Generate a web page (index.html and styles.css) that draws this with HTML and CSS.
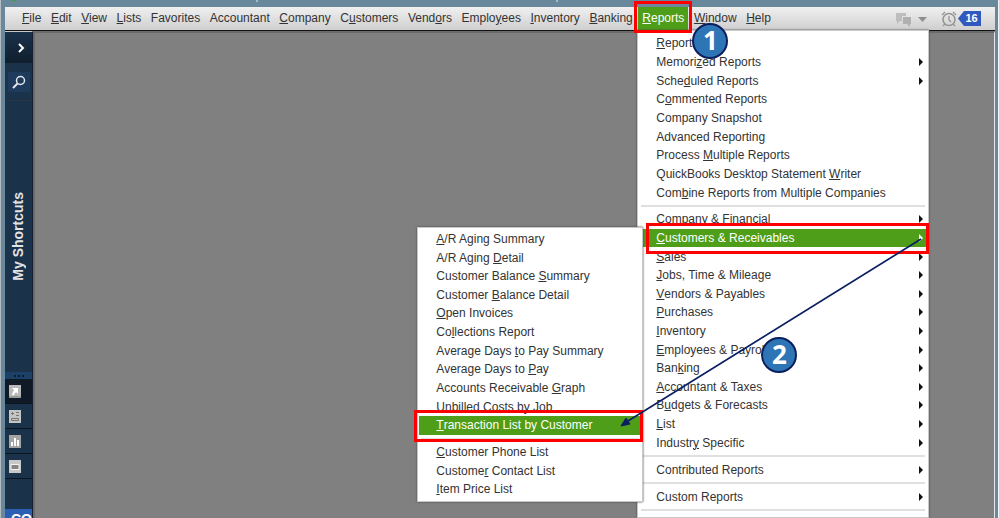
FILE: index.html
```html
<!DOCTYPE html>
<html lang="en">
<head>
    <meta charset="UTF-8">
    <meta name="viewport" content="width=device-width, initial-scale=1.0">
    <title>Reports menu</title>
    <link rel="stylesheet" href="styles.css">
</head>
<body>
    <div class="frame">
        <div class="title-bar">
            <svg class="app-icon" width="12" height="7" viewBox="0 0 12 7"><circle cx="6" cy="-5" r="6" fill="#3f9c35"/></svg>
            <svg class="title-mark" width="4" height="7" viewBox="0 0 4 7"><path d="M1 0v2" stroke="#e8eef2"/></svg>
            <svg class="title-mark" width="4" height="7" viewBox="0 0 4 7"><path d="M1 0v2" stroke="#e8eef2"/></svg>
        </div>
        <nav class="menu-bar">
            <div class="menus">
                <button class="menu-btn"><u>F</u>ile</button>
                <button class="menu-btn"><u>E</u>dit</button>
                <button class="menu-btn"><u>V</u>iew</button>
                <button class="menu-btn"><u>L</u>ists</button>
                <button class="menu-btn">Favorites</button>
                <button class="menu-btn">Accountant</button>
                <button class="menu-btn"><u>C</u>ompany</button>
                <button class="menu-btn">C<u>u</u>stomers</button>
                <button class="menu-btn">Vend<u>o</u>rs</button>
                <button class="menu-btn">Emplo<u>y</u>ees</button>
                <button class="menu-btn"><u>I</u>nventory</button>
                <button class="menu-btn"><u>B</u>anking</button>
                <div class="menu-open">
                    <button class="menu-btn active"><u>R</u>eports</button>
                    <div class="dropdown reports">
                        <ul class="group top">
                            <li><button class="item"><u>R</u>eport</button></li>
                            <li><button class="item more">Memori<u>z</u>ed Reports</button></li>
                            <li><button class="item more">Sche<u>d</u>uled Reports</button></li>
                            <li><button class="item">C<u>o</u>mmented Reports</button></li>
                            <li><button class="item">Company Snapshot</button></li>
                            <li><button class="item">Advanced Reporting</button></li>
                            <li><button class="item">Process <u>M</u>ultiple Reports</button></li>
                            <li><button class="item">QuickBooks Desktop Statement <u>W</u>riter</button></li>
                            <li><button class="item">Com<u>b</u>ine Reports from Multiple Companies</button></li>
                        </ul>
                        <hr>
                        <ul class="group areas">
                            <li><button class="item more">Company &amp; Financi<u>a</u>l</button></li>
                            <li class="opened">
                                <button class="item more active"><u>C</u>ustomers &amp; Receivables</button>
                                <div class="dropdown customers">
                                    <ul class="group lists">
                                        <li><button class="item"><u>A</u>/R Aging Summary</button></li>
                                        <li><button class="item">A/R Aging <u>D</u>etail</button></li>
                                        <li><button class="item">Customer Balance <u>S</u>ummary</button></li>
                                        <li><button class="item">Customer <u>B</u>alance Detail</button></li>
                                        <li><button class="item"><u>O</u>pen Invoices</button></li>
                                        <li><button class="item">Co<u>l</u>lections Report</button></li>
                                        <li><button class="item">Average Days <u>t</u>o Pay Summary</button></li>
                                        <li><button class="item">Average Days to <u>P</u>ay</button></li>
                                        <li><button class="item">Accounts Receivable <u>G</u>raph</button></li>
                                        <li><button class="item">Unbilled Costs by <u>J</u>ob</button></li>
                                        <li class="opened">
                                            <button class="item active"><u>T</u>ransaction List by Customer</button>
                                            <span class="mark-box mark-transaction"></span>
                                        </li>
                                    </ul>
                                    <hr>
                                    <ul class="group contacts">
                                        <li><button class="item"><u>C</u>ustomer Phone List</button></li>
                                        <li><button class="item">Custome<u>r</u> Contact List</button></li>
                                        <li><button class="item"><u>I</u>tem Price List</button></li>
                                    </ul>
                                </div>
                                <span class="mark-box mark-customers"></span>
                                <svg class="arrow" width="304" height="192" viewBox="0 0 304 192">
                                    <path d="M302 2L9 184" fill="none" stroke="#0b1f63" stroke-width="1.7"/>
                                    <path d="M2 189l5-8 4 6z" fill="#0b1f63" stroke="#0b1f63"/>
                                </svg>
                                <span class="step step-two">2</span>
                            </li>
                            <li><button class="item more"><u>S</u>ales</button></li>
                            <li><button class="item more"><u>J</u>obs, Time &amp; Mileage</button></li>
                            <li><button class="item more"><u>V</u>endors &amp; Payables</button></li>
                            <li><button class="item more"><u>P</u>urchases</button></li>
                            <li><button class="item more"><u>I</u>nventory</button></li>
                            <li><button class="item more"><u>E</u>mployees &amp; Payroll</button></li>
                            <li><button class="item more">Ban<u>k</u>ing</button></li>
                            <li><button class="item more"><u>A</u>ccountant &amp; Taxes</button></li>
                            <li><button class="item more">B<u>u</u>dgets &amp; Forecasts</button></li>
                            <li><button class="item more"><u>L</u>ist</button></li>
                            <li><button class="item more">Industr<u>y</u> Specific</button></li>
                        </ul>
                        <hr>
                        <ul class="group single">
                            <li><button class="item more">Contributed Reports</button></li>
                        </ul>
                        <hr>
                        <ul class="group single">
                            <li><button class="item more">Custom Reports</button></li>
                        </ul>
                        <hr>
                    </div>
                    <span class="mark-box mark-reports"></span>
                    <span class="step step-one">1</span>
                </div>
                <button class="menu-btn"><u>W</u>indow</button>
                <button class="menu-btn"><u>H</u>elp</button>
            </div>
            <div class="status">
                <button class="icon-btn" aria-label="Messages">
                    <svg width="34" height="16" viewBox="0 0 34 16">
                        <path d="M1 2h10v3H7v5H5l-3 3v-3H1z" fill="#bdbdbd"/>
                        <path d="M8 6h8v7h-1v3l-3-3H8z" fill="#b0b0b0"/>
                        <path d="M23 6h9l-4.500 5z" fill="#8e8e8e"/>
                    </svg>
                </button>
                <button class="icon-btn reminder" aria-label="Reminders">
                    <svg width="16" height="16" viewBox="0 0 16 16" fill="none" stroke="#959595">
                        <circle cx="8" cy="8.500" r="6" stroke-width="1.600"/>
                        <path d="M8 5v4l2 2M1 4l3-3M15 4l-3-3M4 13l-2 2M12 13l2 2" stroke-width="1.300"/>
                    </svg>
                    <span class="count">16</span>
                </button>
            </div>
        </nav>
        <div class="workspace">
            <aside class="shortcuts">
                <button class="side-btn expand" aria-label="Expand">
                    <svg width="14" height="14" viewBox="0 0 14 14"><path d="M5 3l4 4-4 4" fill="none" stroke="#fff" stroke-width="2"/></svg>
                </button>
                <button class="side-btn search" aria-label="Search">
                    <span class="search-box">
                        <svg width="14" height="14" viewBox="0 0 14 14" fill="none" stroke="#e4e8ec">
                            <circle cx="8.500" cy="5.500" r="4" stroke-width="1.500"/>
                            <path d="M5.500 8.500L1 13" stroke-width="2"/>
                        </svg>
                    </span>
                </button>
                <div class="side-title"><span>My Shortcuts</span></div>
                <div class="grip"><i></i><i></i><i></i></div>
                <button class="side-btn tool current" aria-label="My Shortcuts">
                    <svg width="12" height="13" viewBox="0 0 12 13"><path d="M0 0h12v13H0z" fill="#b9b9b9"/><path d="M3 3h6v6L7 7l-3 4-1-2 2-4z" fill="#fff"/><path d="M0 12h12" stroke="#7d7d7d"/></svg>
                </button>
                <button class="side-btn tool" aria-label="View Balances">
                    <svg width="12" height="13" viewBox="0 0 12 13"><path d="M0 0h12v13H0z" fill="#c4c4c4"/><path d="M2 3.500h3M3.500 2v3M7 2.500h3M7 5.500h3M2.500 8.500h7v2h-7z" fill="none" stroke="#777"/></svg>
                </button>
                <button class="side-btn tool" aria-label="Run Favorite Reports">
                    <svg width="12" height="13" viewBox="0 0 12 13"><path d="M0 0h12v13H0z" fill="#a4a4a4"/><path d="M3 11V7M6 11V3M9 11V5" stroke="#fff" stroke-width="2"/></svg>
                </button>
                <button class="side-btn tool" aria-label="Open Windows">
                    <svg width="12" height="13" viewBox="0 0 12 13"><path d="M0 0h12v13H0z" fill="#c8c8c8"/><path d="M2 4.500h8v5H2z" fill="#858585" stroke="#f4f4f4"/></svg>
                </button>
                <div class="spacer"></div>
                <div class="promo">CO</div>
            </aside>
            <main class="desktop"></main>
        </div>
    </div>
</body>
</html>
```

FILE: styles.css
```css
*{
    margin: 0;
    padding: 0;
    box-sizing: border-box;
}
body{
    height: 100vh;
    overflow: hidden;
    background: #f2f4f6;
    color: #333;
    font: 12px/18px "Liberation Sans", Arial, sans-serif;
}
ul{
    list-style: none;
}
svg{
    display: block;
}
button{
    border: none;
    background: none;
    color: inherit;
    font: inherit;
}
.frame{
    display: flex;
    flex-direction: column;
    height: 100%;
    margin-right: 1px;
    padding: 0 3px 0 4px;
    border-left: 1px solid #b5bcc1;
    background: #6a889c;
}
.title-bar{
    display: flex;
    flex: none;
    gap: 236px;
    height: 7px;
    padding-left: 3px;
}
.title-mark + .title-mark{
    margin-left: 60px;
}

/* menu bar */
.menu-bar{
    display: flex;
    flex: none;
    position: relative;
    z-index: 1;
    height: 24px;
    padding-left: 13px;
    border-bottom: 1px solid #111;
    background: linear-gradient(#f0f0f0, #cfcfcf);
}
.menus{
    display: flex;
    justify-content: space-between;
    width: 757px;
}
.menu-btn{
    padding: 0 4px 1px;
    white-space: nowrap;
}
.menu-open,
.opened{
    position: relative;
}
.menu-open{
    display: flex;
}
.active{
    background: #4e9e19;
    color: #fff;
}
.status{
    display: flex;
    align-items: center;
    gap: 12px;
    margin-left: auto;
    padding-right: 14px;
}
.icon-btn{
    display: flex;
    align-items: center;
}
.reminder{
    gap: 1px;
}
.count{
    width: 23px;
    padding-left: 4px;
    background: #3059c0;
    color: #fff;
    font-size: 11px;
    font-weight: bold;
    line-height: 15px;
    clip-path: polygon(0 50%, 6px 0, 100% 0, 100% 100%, 6px 100%);
}

/* drop-down menus */
.dropdown{
    position: absolute;
    padding: 3px 1px;
    border: 1px solid #c8c8c8;
    background: #fff;
    box-shadow: 0 0 2px #444;
}
.reports{
    top: 23px;
    left: -1px;
    width: 292px;
}
.customers{
    top: -2px;
    right: 284px;
    width: 226px;
    padding: 2px 1px;
}
.group{
    display: grid;
    grid-auto-rows: 1fr;
}
.top{
    height: 168px;
}
.areas{
    height: 242px;
}
.lists{
    height: 205px;
}
.contacts{
    height: 56px;
}
.single{
    height: 19px;
}
.item{
    display: flex;
    align-items: center;
    width: 100%;
    height: 100%;
    padding: 0 16px;
    white-space: pre;
    text-align: left;
}
.reports .item{
    padding: 0 4px 0 17px;
}
.more::after{
    content: "";
    margin-left: auto;
    border: 4px solid transparent;
    border-left-color: #111;
    border-right: none;
}
.more.active::after{
    border-left-color: #fff;
}
hr{
    height: 2px;
    margin: 3px 2px;
    border: none;
    background: #e0e0e0;
}

/* numbered steps */
.mark-box{
    position: absolute;
    border: 3px solid #f00;
    pointer-events: none;
}
.mark-reports{
    inset: -6px -4px -3px -4px;
}
.mark-customers{
    inset: -6px -2px -7px 7px;
}
.mark-transaction{
    inset: -6px -2px -7px -5px;
}
.arrow{
    position: absolute;
    top: 8px;
    right: 4px;
}
.step{
    position: absolute;
    width: 36px;
    height: 36px;
    border: 2px solid #0b1f5e;
    border-radius: 50%;
    background: #2e75b6;
    color: #fff;
    font: bold 26px/31px "Open Sans", sans-serif;
    text-align: center;
}
.step-one{
    top: 16px;
    left: 54px;
}
.step-two{
    top: 108px;
    left: 122px;
}

/* shortcuts bar */
.workspace{
    display: flex;
    flex: 1;
    min-height: 0;
}
.shortcuts{
    display: flex;
    flex-direction: column;
    width: 28px;
    border-top: 1px solid #c4c8cc;
    border-right: 1px solid #12202e;
    background: #1b324b;
}
.side-btn{
    display: flex;
    flex: none;
    align-items: center;
    justify-content: center;
}
.expand{
    height: 31px;
    padding-left: 4px;
    background: linear-gradient(#1b324b, #0f1e2d);
}
.search{
    height: 38px;
    border-bottom: 1px solid #2b3440;
}
.search-box{
    padding: 3px 4px;
    background: #1e3a5c;
}
.side-title{
    flex: 1;
    padding: 91px 0 0 4px;
    color: #e3e3e3;
    font-size: 14px;
    font-weight: bold;
}
.side-title span{
    writing-mode: vertical-rl;
    transform: rotate(180deg);
}
.grip{
    display: flex;
    flex: none;
    align-items: center;
    justify-content: center;
    gap: 2px;
    height: 7px;
    background: #1d4068;
}
.grip i{
    width: 2px;
    height: 2px;
    background: #0e1c2a;
}
.tool{
    justify-content: flex-start;
    height: 25px;
    padding-left: 4px;
    border-bottom: 1px solid #0b1520;
}
.current{
    background: #0f1a26;
}
.spacer{
    flex: none;
    height: 30px;
}
.promo{
    flex: none;
    height: 9px;
    padding-left: 6px;
    overflow: hidden;
    background: #2b5fb4;
    color: #fff;
    font-size: 14px;
    font-weight: bold;
    line-height: 20px;
}
.desktop{
    flex: 1;
    border: 1px solid #6b6b6b;
    border-width: 2px 1px 0 2px;
    border-right-color: #e4e8ea;
    background: #808080;
}
```
